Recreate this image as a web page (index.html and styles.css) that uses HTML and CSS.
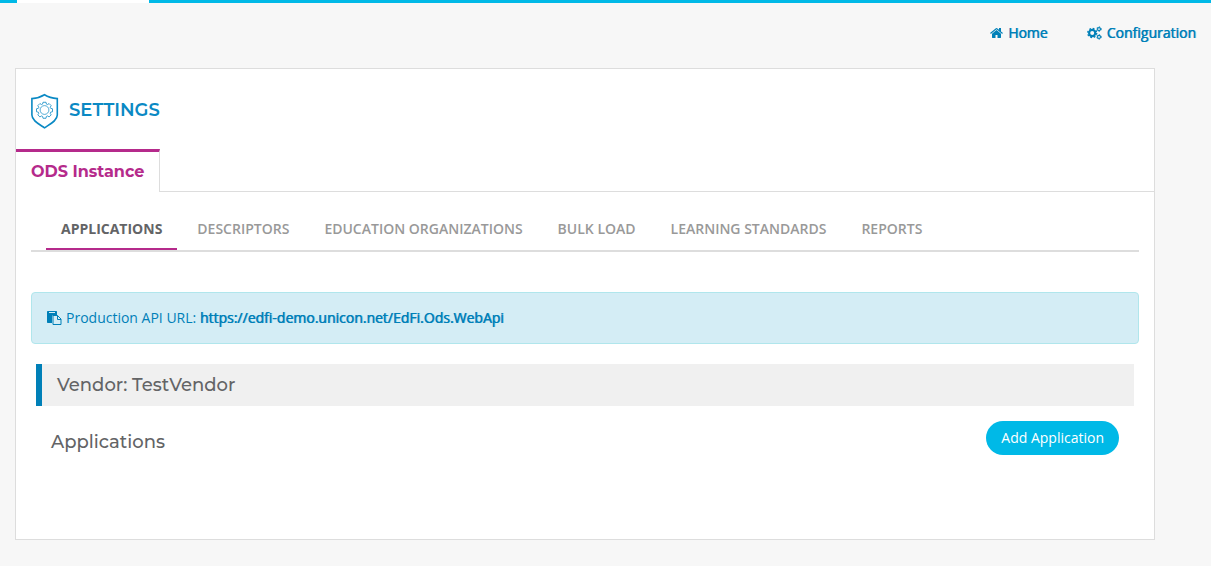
FILE: index.html
```html
<!DOCTYPE html>
<html lang="en">
<head>
<meta charset="utf-8">
<title>Settings</title>
<link rel="stylesheet" href="styles.css">
</head>
<body>
<div class="topbar"><div class="topbar-logo"></div></div>
<nav class="main-nav" aria-label="Main">
  <a href="#"><svg class="home-icon" viewBox="0 0 1664 1792" aria-hidden="true"><path d="M1408 992v480q0 26-19 45t-45 19H960v-384H704v384H320q-26 0-45-19t-19-45V992q0-1 .5-3t.5-3l575-474 575 474q1 2 1 6zm223-69l-62 74q-8 9-21 11h-3q-13 0-21-7L832 424 140 1001q-12 8-24 7-13-2-21-11l-62-74q-8-10-7-23.5T37 878l719-599q32-26 76-26t76 26l244 204V288q0-14 9-23t23-9h192q14 0 23 9t9 23v408l219 182q10 8 11 21.5t-7 23.5z"/></svg>Home</a>
  <a href="#"><svg class="cogs-icon" viewBox="0 0 15 14" aria-hidden="true"><g fill="none" stroke="currentColor"><circle cx="5.2" cy="7" r="3.1" stroke-width="2.2"/><circle cx="5.2" cy="7" r="4.5" stroke-width="1.4" stroke-dasharray="1.767"/><circle cx="12" cy="3.1" r="1.5" stroke-width="1.1"/><circle cx="12" cy="3.1" r="2.3" stroke-width=".9" stroke-dasharray="1.204"/><circle cx="12" cy="10.9" r="1.5" stroke-width="1.1"/><circle cx="12" cy="10.9" r="2.3" stroke-width=".9" stroke-dasharray="1.204"/></g></svg>Configuration</a>
</nav>
<main class="card">
  <header class="card-header">
    <svg class="shield-icon" viewBox="0 0 29 36" aria-hidden="true"><g fill="none" stroke="currentColor"><path stroke-width="1.6" d="M13.500 1.800C10 4 5.500 5.300 .9 5.600v16.400c0 5.700 7.400 9.300 12.600 12.900 5.200-3.600 12.800-7.200 12.800-12.900V5.600C21.500 5.300 17 4 13.500 1.800z"/><circle cx="13.500" cy="17" r="4.400" stroke-width=".7"/><path stroke-width=".8" stroke-linejoin="round" d="M12 9.250h3l.4 1.800 1.100.5 1.600-1 2.100 2.100-1 1.600.5 1.100 1.800.4v3l-1.800.4-.5 1.100 1 1.600-2.100 2.100-1.600-1-1.100.5-.4 1.800h-3l-.4-1.800-1.100-.5-1.600 1-2.100-2.100 1-1.600-.5-1.100-1.800-.4v-3l1.800-.4.5-1.100-1-1.600 2.100-2.100 1.600 1 1.100-.5z"/></g></svg>
    <h1>SETTINGS</h1>
  </header>
  <nav class="instance-tabs" aria-label="Instances"><a href="#">ODS Instance</a></nav>
  <div class="card-body">
    <nav class="section-tabs" aria-label="Sections">
      <a class="active" href="#">APPLICATIONS</a>
      <a href="#">DESCRIPTORS</a>
      <a href="#">EDUCATION ORGANIZATIONS</a>
      <a href="#">BULK LOAD</a>
      <a href="#">LEARNING STANDARDS</a>
      <a href="#">REPORTS</a>
    </nav>
    <div class="alert">
      <svg class="paste-icon" viewBox="0 0 15 14" aria-hidden="true"><path fill="currentColor" d="M.7 0h8.600q.7 0 .7.700V4H6.700Q5 4 5 5.700V12H.7Q0 12 0 11.300V.7Q0 0 .7 0z"/><path fill="#d4edf5" d="M2 1h6v1H2z"/><path fill="none" stroke="currentColor" d="M6 4.500h4.500l3.500 3.500v5.500H6zM10.500 4.500v4H14"/></svg>
      <p>Production API URL: <strong>https://edfi-demo.unicon.net/EdFi.Ods.WebApi</strong></p>
    </div>
    <section class="vendor">
      <h2 class="vendor-title">Vendor: TestVendor</h2>
      <div class="applications">
        <h2>Applications</h2>
        <button type="button">Add Application</button>
      </div>
    </section>
  </div>
</main>
</body>
</html>
```
FILE: styles.css
```css
* {
  box-sizing: border-box;
}

body {
  margin: 0;
  background: #f7f7f7;
  color: #636466;
  font: 14px/20px "Open Sans", "Noto Sans", sans-serif;
}

a {
  text-decoration: none;
}

h1,
h2,
p {
  margin: 0;
}

h1,
h2,
.instance-tabs {
  font-family: Montserrat, Inter, sans-serif;
}

svg {
  flex: none;
}

.topbar {
  height: 3px;
  padding-left: 17px;
  background: #00b9e7;
}

.topbar-logo {
  width: 132px;
  height: 3px;
  background: #fff;
}

.main-nav {
  display: flex;
  justify-content: flex-end;
  gap: 39px;
  padding: 20px 15px 25px;
}

.main-nav a {
  display: flex;
  align-items: center;
  gap: 5px;
  color: #0080b8;
}

.main-nav a,
.alert strong {
  font-weight: 400;
  text-shadow: 0 0 0 currentColor, 1px 0 0 rgba(0, 128, 184, 0.4);
}

.home-icon {
  width: 13px;
  height: 14px;
  fill: currentColor;
}

.cogs-icon,
.paste-icon {
  width: 15px;
  height: 14px;
}

.card {
  max-width: 1140px;
  margin: 0 15px 26px;
  border: 1px solid #ddd;
  background: #fff;
}

.card-header {
  display: flex;
  align-items: center;
  gap: 9px;
  padding: 24px 15px 20px;
  color: #0a89c4;
}

.shield-icon {
  width: 29px;
  height: 36px;
}

h1 {
  padding-bottom: 2px;
  font-size: 18px;
  font-weight: 600;
  line-height: 20px;
}

.instance-tabs {
  display: flex;
}

.instance-tabs::after {
  flex: 1;
  border-bottom: 1px solid #ddd;
  content: "";
}

.instance-tabs a {
  padding: 10px 15px;
  border-top: 3px solid #b52a8b;
  border-right: 1px solid #ddd;
  color: #b52a8b;
  font-size: 16px;
  font-weight: 700;
}

.card-body {
  padding: 22px 15px 74px;
}

.section-tabs {
  display: flex;
  gap: 5px;
  padding: 0 15px;
  border-bottom: 2px solid #ddd;
}

.section-tabs a {
  padding: 5px 15px 9px;
  border-bottom: 2px solid transparent;
  color: #999;
  font-weight: 600;
}

.section-tabs .active {
  border-color: #b52a8b;
  color: #636466;
  font-weight: 700;
}

.alert {
  display: flex;
  align-items: center;
  gap: 4px;
  margin-top: 40px;
  padding: 15px;
  border: 1px solid #b0e6ec;
  border-radius: 4px;
  background: #d4edf5;
  color: #0080b8;
}

.vendor {
  padding: 20px 5px 0;
}

h2 {
  font-size: 18px;
  font-weight: 500;
  line-height: 20px;
}

.vendor-title {
  padding: 11px 15px;
  border-left: 6px solid #0080b8;
  background: #f0f0f0;
}

.applications {
  display: flex;
  align-items: flex-end;
  justify-content: space-between;
  padding: 15px 15px 10px;
}

.applications h2 {
  padding-bottom: 3px;
}

button {
  padding: 7px 15px;
  border: 0;
  border-radius: 17px;
  background: #00b9e7;
  color: #fff;
  font: inherit;
}
```
